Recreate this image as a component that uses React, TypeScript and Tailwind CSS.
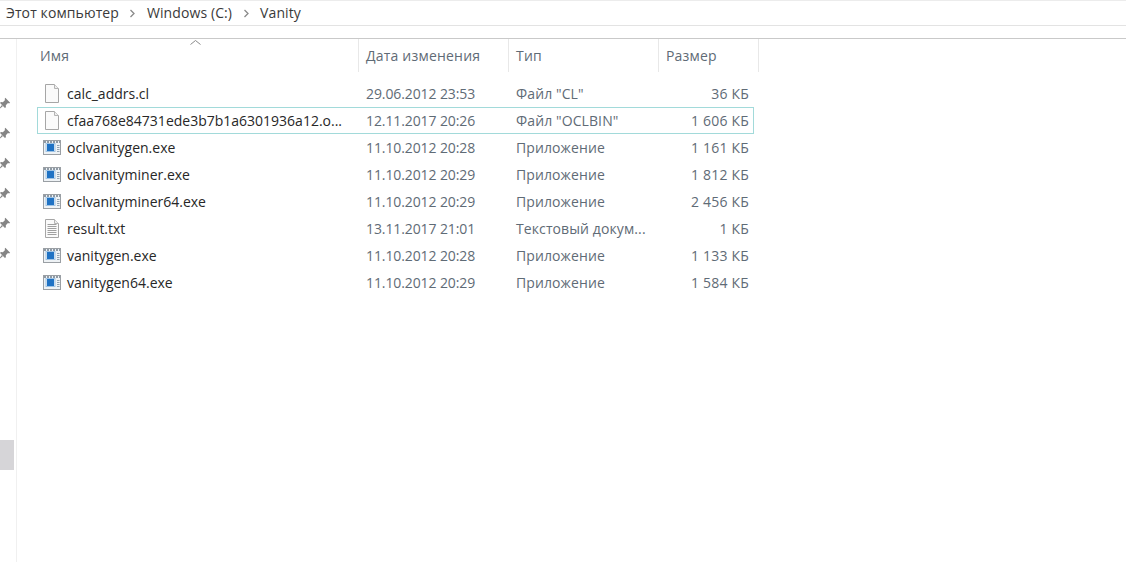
const font = "[font-family:'Open_Sans','Noto_Sans',sans-serif]";

function Doc({ lines = false }: { lines?: boolean }) {
  return (
    <svg width="16" height="19" viewBox="0 0 16 19" fill="none">
      <path d="M1.5 0.5H10.5L14.5 4.5V18.5H1.5Z" fill="#fafafa" stroke="#a6a6a6" />
      <path d="M10.5 0.5V4.5H14.5" fill="#eeeeee" stroke="#b4b4b4" />
      {lines &&
        [5, 7, 9, 11, 13, 15].map((y) => <path key={y} d={`M3.5 ${y + 0.5}H12.5`} stroke="#a0a0a0" />)}
    </svg>
  );
}

function Exe() {
  return (
    <svg width="18" height="15" viewBox="0 0 18 15" fill="none">
      <rect x="0.5" y="0.5" width="17" height="14" fill="#eef2f5" stroke="#9a9fa4" />
      <path d="M1 2H17" stroke="#8f9aa5" strokeWidth="2" strokeDasharray="2 1" />
      <rect x="4" y="4" width="7" height="7" fill="#1f72c4" />
      <rect x="3" y="3.5" width="9" height="8" stroke="#9fc3e4" />
      <path d="M14 5.5H16.5M14 7.5H16.5M14 9.5H16.5M14 11.5H16.5" stroke="#94a4b2" />
    </svg>
  );
}

function Pin() {
  return (
    <svg width="13" height="13" viewBox="0 0 12 12" fill="#858585">
      <path d="M6.8 0.8L11.2 5.2L10.2 5.9L9.2 5.5L7.2 7.5L7.3 9.4L6.4 10.1L1.9 5.6L2.6 4.7L4.5 4.8L6.5 2.8L6.1 1.8Z" />
      <path d="M3.6 7.4L4.6 8.4L1 11.3L0.7 11Z" />
    </svg>
  );
}

function Chevron() {
  return (
    <svg width="7" height="9" viewBox="0 0 7 9" fill="none" className="mx-[10.5px]">
      <path d="M1.5 1L5 4.5L1.5 8" stroke="#8a8a8a" strokeWidth="1.3" />
    </svg>
  );
}

const rows = [
  { n: "calc_addrs.cl", d: "29.06.2012 23:53", t: 'Файл "CL"', s: "36 КБ", i: "doc" },
  { n: "cfaa768e84731ede3b7b1a6301936a12.o...", d: "12.11.2017 20:26", t: 'Файл "OCLBIN"', s: "1 606 КБ", i: "doc", sel: true },
  { n: "oclvanitygen.exe", d: "11.10.2012 20:28", t: "Приложение", s: "1 161 КБ", i: "exe" },
  { n: "oclvanityminer.exe", d: "11.10.2012 20:29", t: "Приложение", s: "1 812 КБ", i: "exe" },
  { n: "oclvanityminer64.exe", d: "11.10.2012 20:29", t: "Приложение", s: "2 456 КБ", i: "exe" },
  { n: "result.txt", d: "13.11.2017 21:01", t: "Текстовый докум...", s: "1 КБ", i: "txt" },
  { n: "vanitygen.exe", d: "11.10.2012 20:28", t: "Приложение", s: "1 133 КБ", i: "exe" },
  { n: "vanitygen64.exe", d: "11.10.2012 20:29", t: "Приложение", s: "1 584 КБ", i: "exe" },
];

export default function App() {
  return (
    <div className={`${font} w-[1126px] h-[562px] overflow-hidden bg-white flex flex-col text-[14px] leading-[20px]`}>
      <div className="h-[26px] shrink-0 border-t border-b border-t-[#ececec] border-b-[#e3e3e3] flex items-center pl-[6px] text-[#3a3a3a] tracking-[0.1px]">
        <span>Этот компьютер</span>
        <Chevron />
        <span>Windows (C:)</span>
        <Chevron />
        <span>Vanity</span>
      </div>
      <div className="h-[13px] shrink-0 border-b border-[#c9c9c9]" />
      <div className="flex-1 flex min-h-0">
        <div className="w-[17px] shrink-0 border-r border-[#f0f0f0] flex flex-col items-start pt-[58px]">
          <div className="flex flex-col gap-[17px]">
            {[0, 1, 2, 3, 4, 5].map((i) => (
              <div key={i} className="-ml-[2px]">
                <Pin />
              </div>
            ))}
          </div>
          <div className="w-[14px] h-[30px] bg-[#d6d5d8] mt-[180px]" />
        </div>
        <div className="flex-1 flex flex-col">
          <div className="relative h-[33px] flex text-[#5f6b76] tracking-[0.2px]">
            <svg width="11" height="5" viewBox="0 0 11 5" fill="none" className="absolute left-[173px] top-[1px]">
              <path d="M0.5 4.5L5.5 0.5L10.5 4.5" stroke="#8a8a8a" />
            </svg>
            <div className="w-[342px] pl-[23px] border-r border-[#e8e8e8] pt-[7px]">Имя</div>
            <div className="w-[150px] pl-[7px] border-r border-[#e8e8e8] pt-[7px]">Дата изменения</div>
            <div className="w-[150px] pl-[7px] border-r border-[#e8e8e8] pt-[7px]">Тип</div>
            <div className="w-[100px] pl-[7px] border-r border-[#e8e8e8] pt-[7px]">Размер</div>
          </div>
          <div className="flex flex-col pt-[8px] pl-[20px]">
            {rows.map((r) => (
              <div
                key={r.n}
                className={`h-[27px] w-[717px] flex items-center border ${r.sel ? "border-[#a2dada]" : "border-transparent"}`}
              >
                <div className="w-[322px] flex items-center shrink-0">
                  <div className="w-[29px] flex justify-center pr-[1px] shrink-0">
                    {r.i === "exe" ? <Exe /> : <Doc lines={r.i === "txt"} />}
                  </div>
                  <span className="text-[#272727] whitespace-nowrap">{r.n}</span>
                </div>
                <div className="w-[150px] pl-[6px] text-[#5f6b76] shrink-0 whitespace-nowrap tracking-[-0.1px]">{r.d}</div>
                <div className="w-[145px] pl-[6px] text-[#5f6b76] shrink-0 whitespace-nowrap tracking-[0.1px]">{r.t}</div>
                <div className="flex-1 pr-[4px] text-right text-[#5f6b76] whitespace-nowrap tracking-[0.2px]">{r.s}</div>
              </div>
            ))}
          </div>
        </div>
      </div>
    </div>
  );
}
